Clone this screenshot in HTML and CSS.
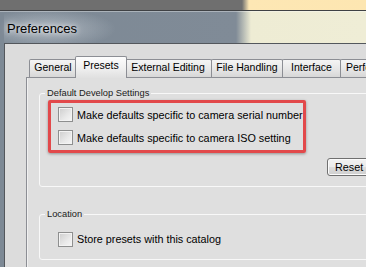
FILE: index.html
```html
<!DOCTYPE html>
<html>
<head>
<meta charset="utf-8">
<title>Preferences</title>
<link rel="stylesheet" href="styles.css">
</head>
<body>
	<div class="desk"></div>
	<div class="window">
		<div class="titlebar"><span class="title">Preferences</span></div>
		<div class="client">
			<div class="tabs">
				<div class="tab t-general">General</div>
				<div class="tab tab-on t-presets">Presets</div>
				<div class="tab t-external">External Editing</div>
				<div class="tab t-files">File Handling</div>
				<div class="tab t-interface">Interface</div>
				<div class="tab t-perf">Performance</div>
			</div>
			<div class="panel">
				<fieldset class="group group-develop">
					<legend>Default Develop Settings</legend>
					<!-- 红框标注 -->
					<div class="highlight">
						<label class="check-row"><span class="box"></span>Make defaults specific to camera serial number</label>
						<label class="check-row"><span class="box"></span>Make defaults specific to camera ISO setting</label>
					</div>
					<div class="button-row"><button class="btn">Reset all default Develop settings</button></div>
				</fieldset>
				<fieldset class="group group-location">
					<legend>Location</legend>
					<label class="check-row"><span class="box"></span>Store presets with this catalog</label>
				</fieldset>
			</div>
		</div>
	</div>
</body>
</html>
```
FILE: styles.css
```css
*{
	margin: 0px;
	padding: 0px;
}
body {
	width: 366px;
	height: 267px;
	overflow: hidden;
	background-color: #6e6e6e;
	font-family: "Liberation Sans", Arial, sans-serif;
	color: #000;
}
/* 顶部桌面条 */
.desk {
	height: 10px;
	border-bottom: 1px solid #3f4144;
	background: linear-gradient(90deg, #6f6f6f 0, #6f6f6f 242px, #fde7b4 249px, #fde6b1 100%);
}
.window {
	height: 256px;
	padding-left: 4px;
	display: flex;
	flex-direction: column;
	background: linear-gradient(90deg, #7d8995 0, #808b97 236px, #eeecd4 251px, #efedd6 100%);
	box-shadow: inset 0 1px 0 rgba(255, 255, 255, 0.35);
}
.titlebar {
	height: 32px;
	flex: none;
	padding: 1px 0 0 3px;
	box-sizing: border-box;
	line-height: 31px;
	background: radial-gradient(ellipse 70px 20px at 42px 18px, rgba(214, 220, 226, 0.55), rgba(214, 220, 226, 0) 100%);
}
.title {
	font-size: 13px;
	text-shadow: 0 0 5px rgba(255, 255, 255, 0.9), 0 0 10px rgba(255, 255, 255, 0.6);
}
.client {
	flex: 1;
	display: flex;
	flex-direction: column;
	border-top: 1px solid #53575c;
	border-left: 1px solid #53575c;
	background-color: #dcdcdc;
	padding: 12px 0 0 21px;
}
/* 选项卡 */
.tabs {
	display: flex;
	align-items: flex-end;
	margin-left: 3px;
	font-size: 10.5px;
}
.tab {
	flex: none;
	box-sizing: border-box;
	height: 18px;
	line-height: 14px;
	margin-left: -1px;
	text-align: center;
	white-space: nowrap;
	border: 1px solid #8c8e94;
	border-bottom: 0;
	border-radius: 2px 2px 0 0;
	background: linear-gradient(#f4f4f4, #e6e6e6 55%, #d7d7d7);
}
.t-general { width: 48px; margin-left: 0; }
.t-presets { width: 52px; }
.t-external { width: 88px; }
.t-files { width: 72px; }
.t-interface { width: 59px; }
.t-perf { width: 72px; }
.tab-on {
	height: 22px;
	line-height: 17px;
	margin: 0 -2px -1px -2px;
	position: relative;
	z-index: 1;
	background: linear-gradient(#fdfdfd, #f1f1f1 50%, #e0e0e0);
}
.panel {
	flex: 1;
	width: 420px;
	border-top: 1px solid #8c8e94;
	border-left: 1px solid #8c8e94;
	box-shadow: inset 1px 0 0 #f0f0f0;
	background-color: #dfdfdf;
	padding: 9px 0 0 12px;
}
/* 分组框 */
.group {
	box-sizing: border-box;
	width: 400px;
	min-width: 0;
	border: 1px solid #f8f8f8;
	border-radius: 3px;
	padding: 1px 8px 10px 8px;
}
.group legend {
	font-size: 9.3px;
	line-height: 12px;
	padding: 0 2px;
	margin-left: -3px;
	color: #1a1a1a;
}
.group-location {
	margin-top: 21px;
	padding: 8px 8px 9px 18px;
}
.group-location legend {
	margin-left: -13px;
}
.highlight {
	width: 258px;
	box-sizing: border-box;
	border: 3px solid #e2494b;
	border-radius: 2px;
	box-shadow: 0 1px 3px rgba(0, 0, 0, 0.35);
	padding: 0 0 1px 7px;
}
.check-row {
	display: flex;
	align-items: center;
	height: 23px;
	gap: 4px;
	font-size: 10.8px;
	white-space: nowrap;
}
.group-location .check-row {
	height: 22px;
}
.box {
	flex: none;
	width: 13px;
	height: 13px;
	border: 1px solid #8e8f8f;
	background: linear-gradient(135deg, #cdcdcd, #e9e9e9 60%, #f6f6f6);
	box-shadow: inset 0 0 0 1px #f3f3f3;
}
.button-row {
	margin-top: 5px;
	padding-left: 279px;
	display: flex;
}
.btn {
	flex: none;
	height: 18px;
	line-height: 16px;
	padding: 0 7px;
	font-family: "Liberation Sans", Arial, sans-serif;
	font-size: 10.8px;
	white-space: nowrap;
	color: #000;
	border: 1px solid #707070;
	border-radius: 3px;
	background: linear-gradient(#f2f2f2, #ebebeb 50%, #dddddd 50%, #cfcfcf);
	box-shadow: inset 0 0 0 1px #fbfbfb;
}
```
